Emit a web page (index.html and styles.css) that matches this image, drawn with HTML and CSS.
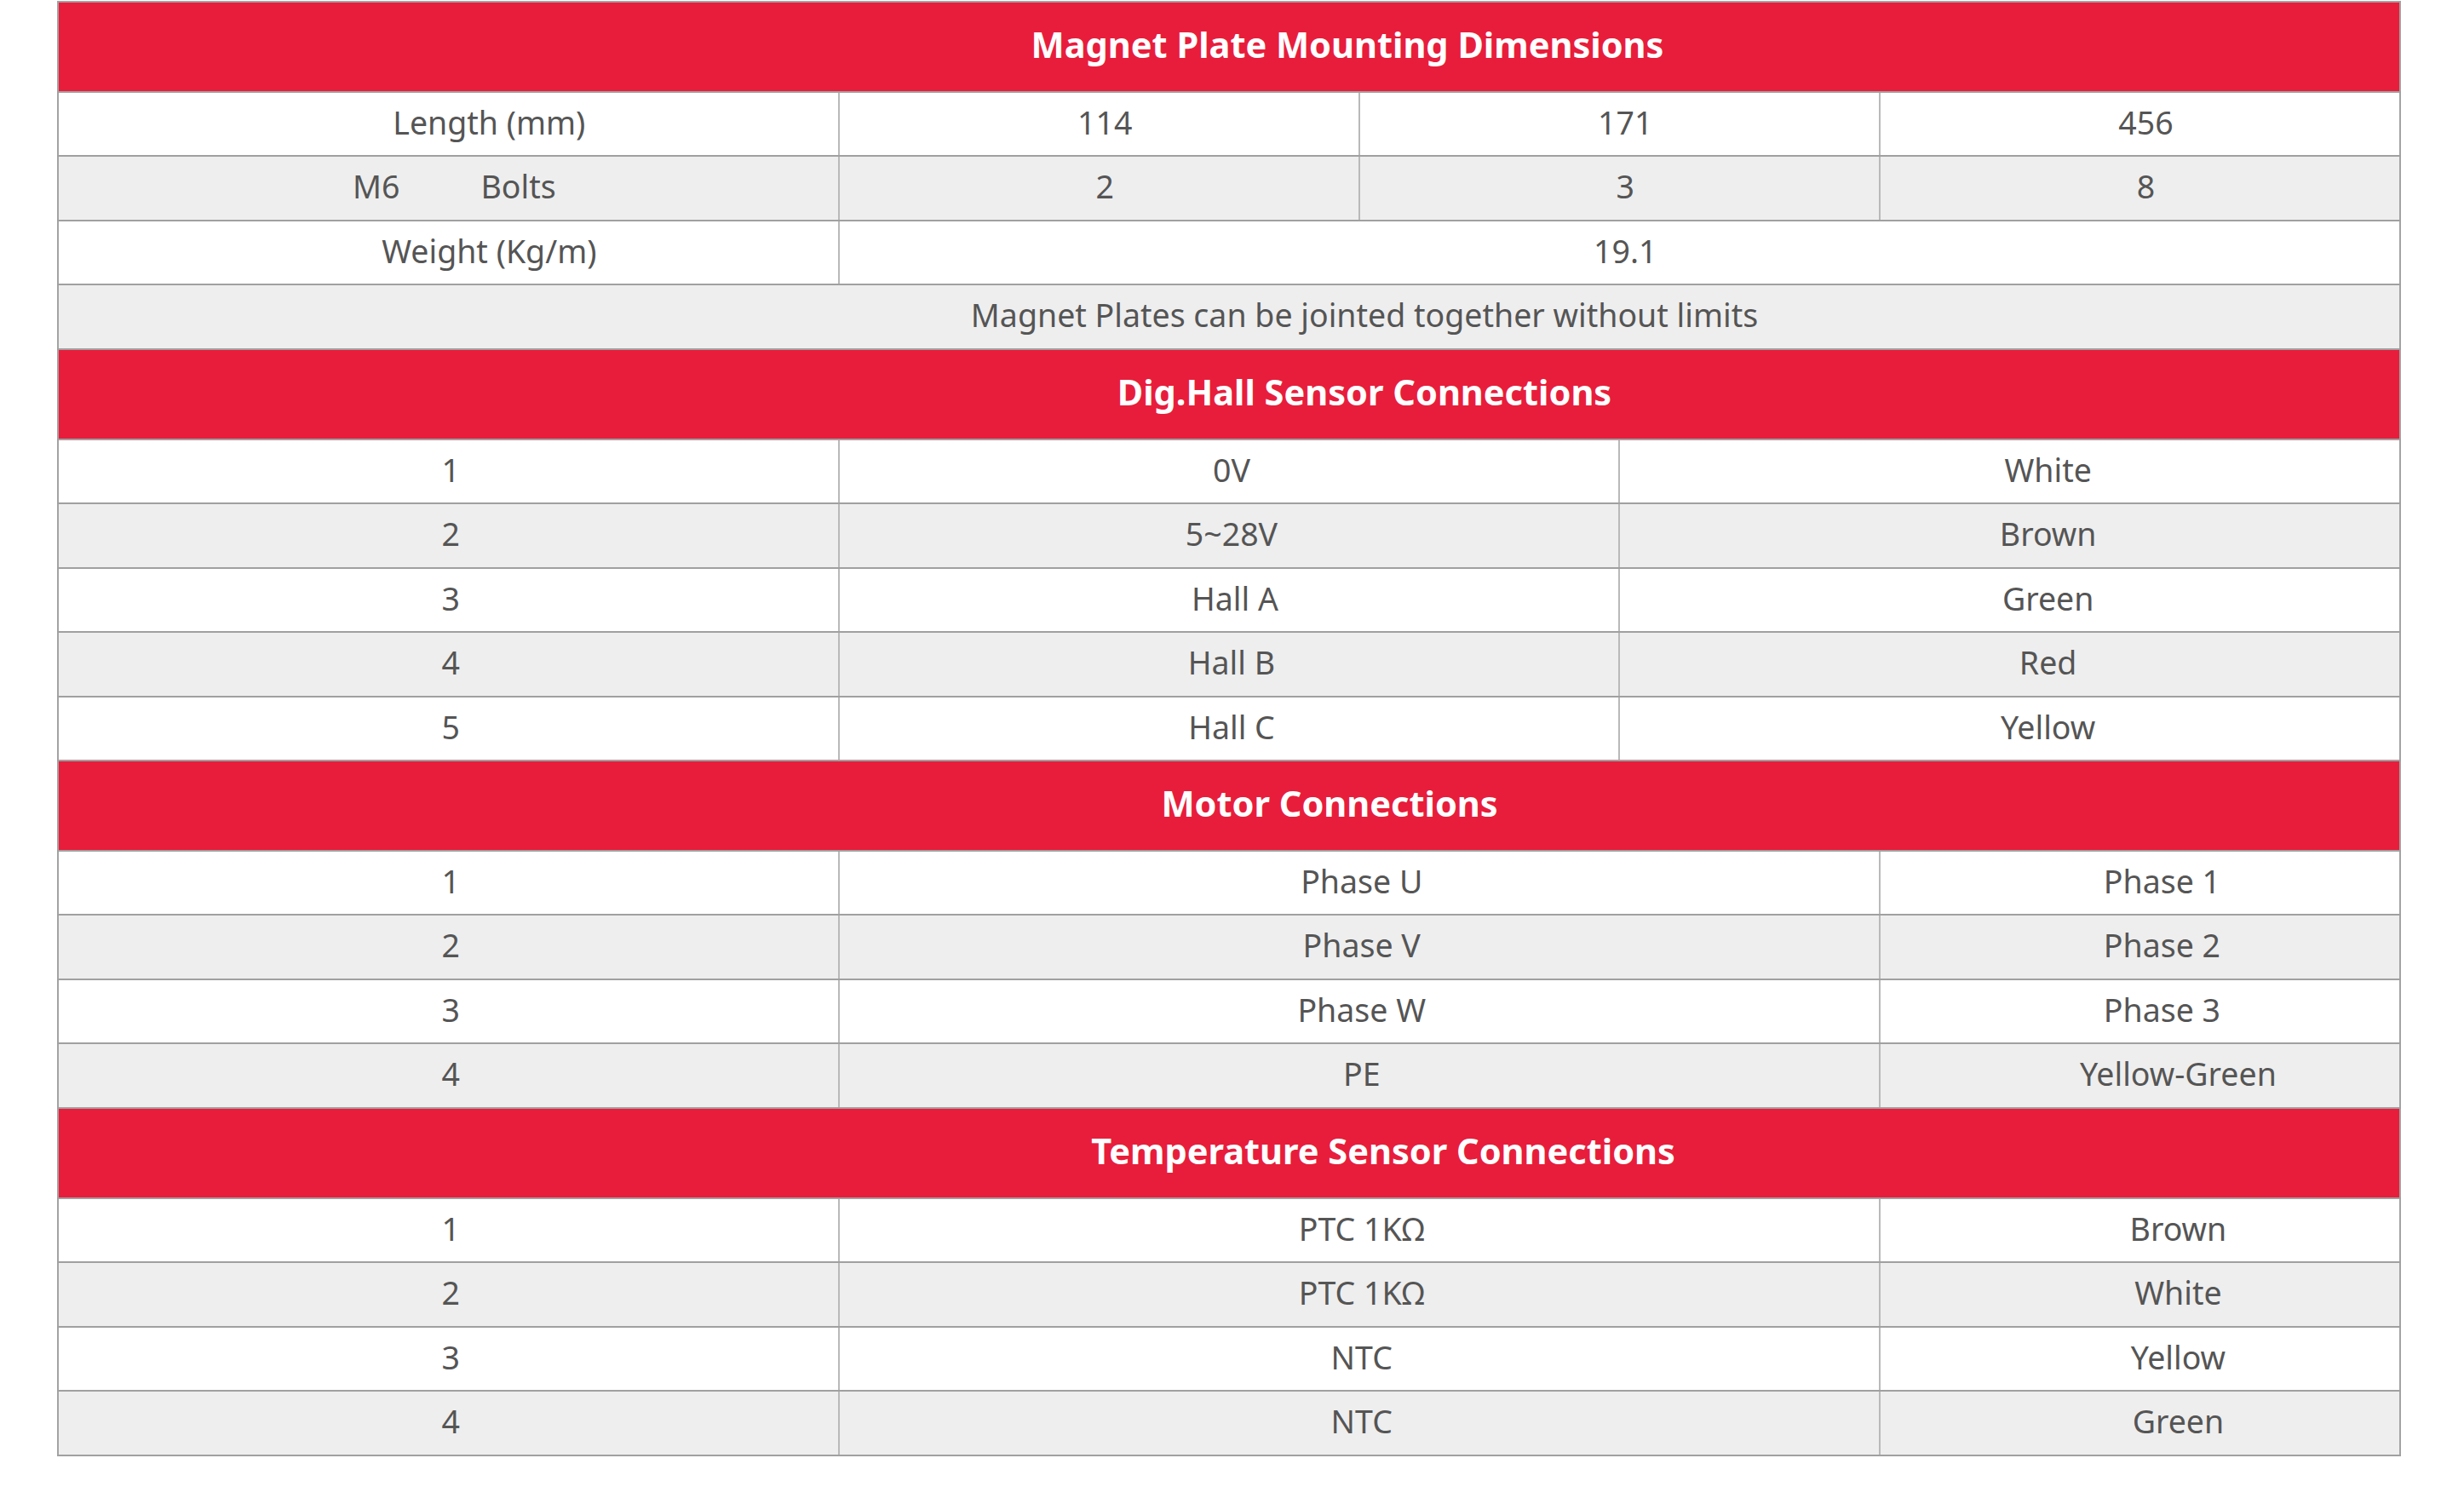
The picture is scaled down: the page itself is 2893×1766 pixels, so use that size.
FILE: index.html
```html
<!DOCTYPE html>
<html lang="en">
<head>
<meta charset="utf-8">
<title>Magnet Plate Specifications</title>
<link rel="stylesheet" href="styles.css">
</head>
<body>
<div class="wrap">
<table class="spec">
  <colgroup>
    <col class="u"><col class="u"><col class="u"><col class="u"><col class="u"><col class="u"><col class="u"><col class="u"><col class="u">
  </colgroup>
  <tbody>
    <tr class="head"><th colspan="9" class="h1">Magnet Plate Mounting Dimensions</th></tr>
    <tr class="odd">
      <td colspan="3" class="s48">Length (mm)</td>
      <td colspan="2" class="s7">114</td>
      <td colspan="2" class="s7">171</td>
      <td colspan="2" class="s7">456</td>
    </tr>
    <tr class="even">
      <td colspan="3" class="s7">M6<span class="gap">Bolts</span></td>
      <td colspan="2" class="s7">2</td>
      <td colspan="2" class="s7">3</td>
      <td colspan="2" class="s7">8</td>
    </tr>
    <tr class="odd">
      <td colspan="3" class="s48">Weight (Kg/m)</td>
      <td colspan="6" class="s7">19.1</td>
    </tr>
    <tr class="even">
      <td colspan="9" class="s159">Magnet Plates can be jointed together without limits</td>
    </tr>

    <tr class="head"><th colspan="9" class="h2">Dig.Hall Sensor Connections</th></tr>
    <tr class="odd"><td colspan="3" class="s3">1</td><td colspan="3" class="s3">0V</td><td colspan="3" class="s45">White</td></tr>
    <tr class="even"><td colspan="3" class="s3">2</td><td colspan="3" class="s3">5~28V</td><td colspan="3" class="s45">Brown</td></tr>
    <tr class="odd"><td colspan="3" class="s3">3</td><td colspan="3" class="s7">Hall A</td><td colspan="3" class="s45">Green</td></tr>
    <tr class="even"><td colspan="3" class="s3">4</td><td colspan="3" class="s3">Hall B</td><td colspan="3" class="s45">Red</td></tr>
    <tr class="odd"><td colspan="3" class="s3">5</td><td colspan="3" class="s3">Hall C</td><td colspan="3" class="s45">Yellow</td></tr>

    <tr class="head"><th colspan="9" class="h3">Motor Connections</th></tr>
    <tr class="odd"><td colspan="3" class="s3">1</td><td colspan="4" class="s3">Phase U</td><td colspan="2" class="s26">Phase 1</td></tr>
    <tr class="even"><td colspan="3" class="s3">2</td><td colspan="4" class="s3">Phase V</td><td colspan="2" class="s26">Phase 2</td></tr>
    <tr class="odd"><td colspan="3" class="s3">3</td><td colspan="4" class="s3">Phase W</td><td colspan="2" class="s26">Phase 3</td></tr>
    <tr class="even"><td colspan="3" class="s3">4</td><td colspan="4" class="s3">PE</td><td colspan="2" class="s45">Yellow-Green</td></tr>

    <tr class="head"><th colspan="9" class="h4">Temperature Sensor Connections</th></tr>
    <tr class="odd"><td colspan="3" class="s3">1</td><td colspan="4" class="s3">PTC 1KΩ</td><td colspan="2" class="s45">Brown</td></tr>
    <tr class="even"><td colspan="3" class="s3">2</td><td colspan="4" class="s3">PTC 1KΩ</td><td colspan="2" class="s45">White</td></tr>
    <tr class="odd"><td colspan="3" class="s3">3</td><td colspan="4" class="s3">NTC</td><td colspan="2" class="s45">Yellow</td></tr>
    <tr class="even"><td colspan="3" class="s3">4</td><td colspan="4" class="s3">NTC</td><td colspan="2" class="s45">Green</td></tr>
  </tbody>
</table>
</div>
</body>
</html>
```

FILE: styles.css
```css
html, body {
  margin: 0;
  padding: 0;
  background: #ffffff;
}

.wrap {
  padding: 1px 0 0 67px;
}

.spec {
  width: 2752px;
  table-layout: fixed;
  border-collapse: collapse;
  font-family: "Noto Sans", "Open Sans", sans-serif;
  color: #555555;
  font-size: 37.5px;
  border-left: 2px solid #a3a3a3;
  border-right: 2px solid #a3a3a3;
  border-top: 2px solid #a3a3a3;
}

.spec col.u {
  width: 11.111%;
}

.spec tr.odd {
  height: 75px;
}

.spec tr.even {
  height: 76px;
}

.spec tr.head {
  height: 106px;
}

.spec th {
  background: #e81d3b;
  color: #ffffff;
  font-weight: 700;
  font-size: 41.5px;
  text-align: center;
  padding: 0 0 6px 0;
  border-bottom: 2px solid #a0a0a0;
}

.spec td {
  text-align: center;
  vertical-align: middle;
  padding: 0 0 5px 0;
  border-bottom: 2px solid #a0a0a0;
  border-right: 2px solid #b9b9b9;
  white-space: nowrap;
}

.spec td:last-child {
  border-right: none;
}

.spec tr.odd td {
  background: #ffffff;
}

.spec tr.even td {
  background: #eeeeee;
}

.h1 { padding-left: 278px !important; }
.h2 { padding-left: 318px !important; }
.h3 { padding-left: 236px !important; }
.h4 { padding-left: 362px !important; }

.s3 { padding-left: 6px !important; }
.s7 { padding-left: 14px !important; }
.s26 { padding-left: 52px !important; }
.s45 { padding-left: 90px !important; }
.s48 { padding-left: 96px !important; }
.s159 { padding-left: 318px !important; }

.gap {
  margin-left: 95px;
}
```
